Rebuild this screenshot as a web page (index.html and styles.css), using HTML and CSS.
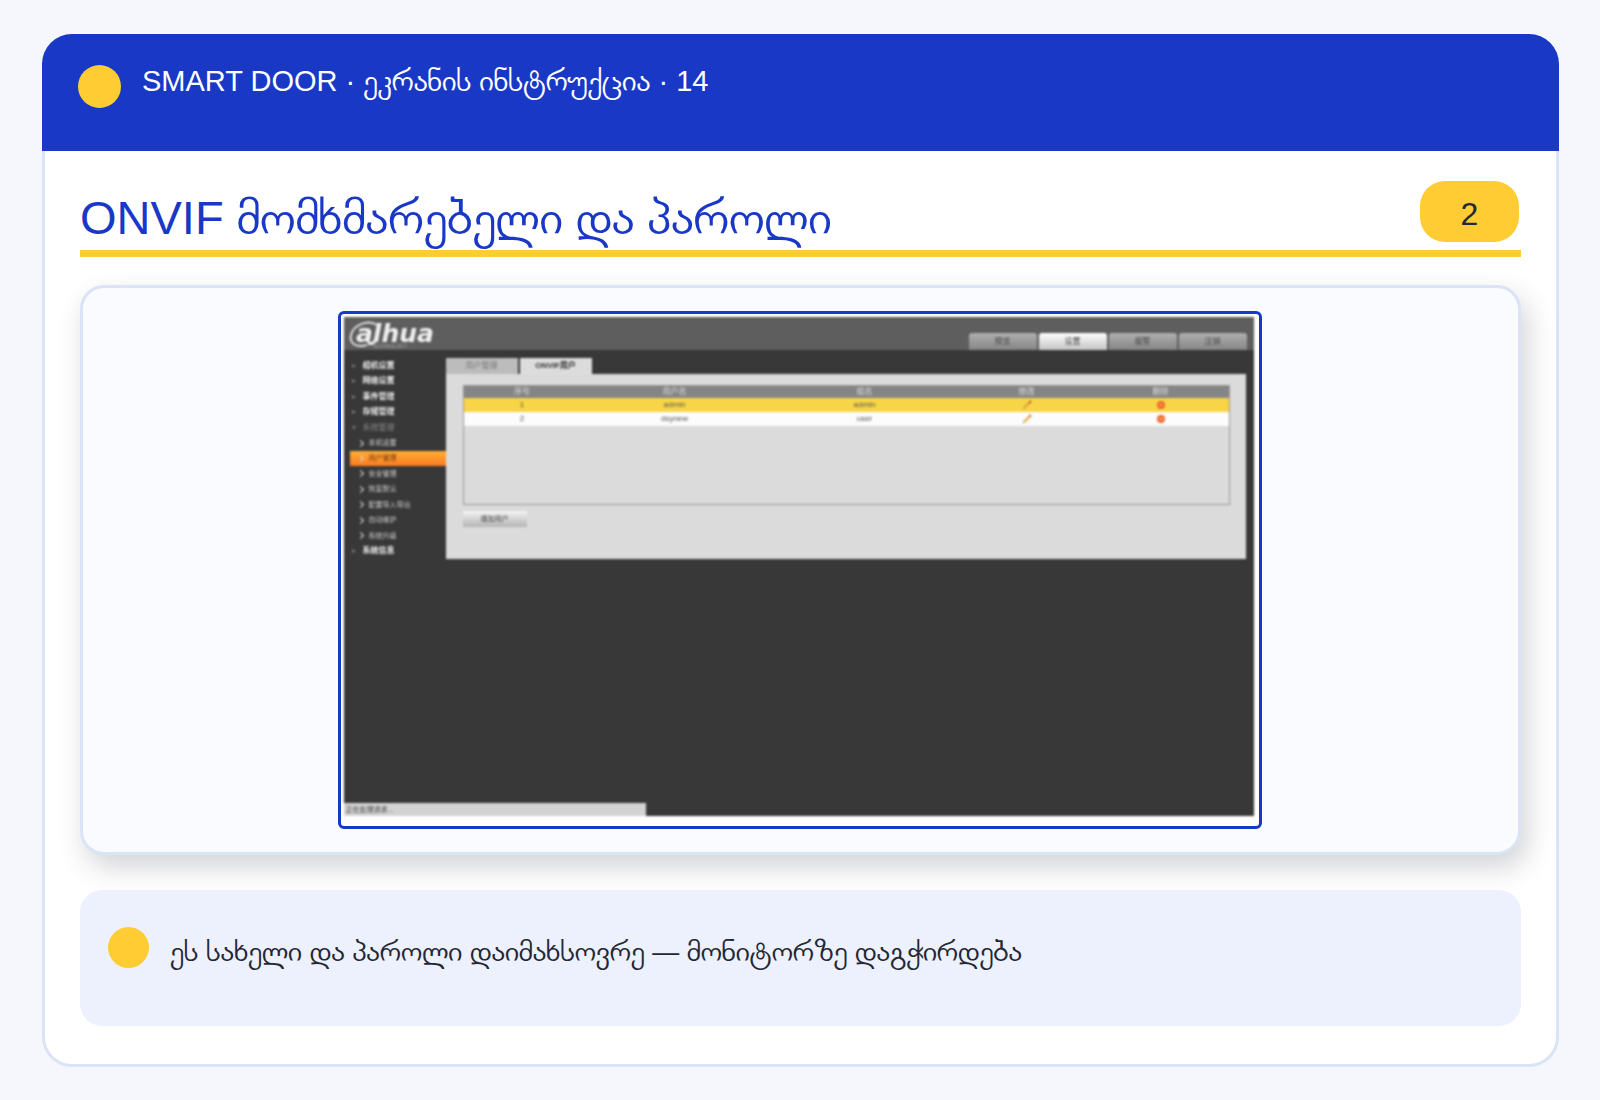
FILE: index.html
```html
<!DOCTYPE html>
<html lang="ka">
<head>
<meta charset="utf-8">
<meta name="viewport" content="width=device-width, initial-scale=1">
<title>SMART DOOR · ეკრანის ინსტრუქცია</title>
<link rel="stylesheet" href="styles.css">
</head>
<body>
<main class="card">
  <header class="card-header">
    <span class="dot"></span>
    <p class="series">SMART DOOR · <span class="ka">ეკრანის ინსტრუქცია</span> · 14</p>
  </header>
  <div class="card-body">
    <div class="title-row">
      <h1 class="title">ONVIF <span class="ka">მომხმარებელი და პაროლი</span></h1>
      <span class="step">2</span>
    </div>
    <section class="stage">
      <div class="frame">
        <div class="device" lang="zh">
          <div class="device-top">
            <svg class="logo" viewBox="0 0 88 30" role="img" aria-label="alhua technology">
              <path d="M28 5C21 0 5 3 2 15c-2 9 6 13 16 10" fill="none" stroke="#e0e0e0" stroke-width="2"/>
              <path d="M26 20c-1 4-4 4-7 3" fill="none" stroke="#f0f0f0" stroke-width="3"/>
              <text class="logo-name" x="7" y="22">alhua</text>
              <text class="logo-sub" x="23" y="28">TECHNOLOGY</text>
            </svg>
            <nav class="main-tabs">
              <button type="button">预览</button>
              <button type="button" class="on">设置</button>
              <button type="button">报警</button>
              <button type="button">注销</button>
            </nav>
          </div>
          <div class="device-main">
            <nav class="menu">
              <a href="#" class="group">相机设置</a>
              <a href="#" class="group">网络设置</a>
              <a href="#" class="group">事件管理</a>
              <a href="#" class="group">存储管理</a>
              <a href="#" class="group open">系统管理</a>
              <a href="#" class="item">本机设置</a>
              <a href="#" class="item current">用户管理</a>
              <a href="#" class="item">安全管理</a>
              <a href="#" class="item">恢复默认</a>
              <a href="#" class="item">配置导入导出</a>
              <a href="#" class="item">自动维护</a>
              <a href="#" class="item">系统升级</a>
              <a href="#" class="group">系统信息</a>
            </nav>
            <div class="content">
              <div class="sub-tabs">
                <button type="button">用户管理</button>
                <button type="button" class="on">ONVIF用户</button>
              </div>
              <div class="pane">
                <div class="table-box">
                  <table class="users">
                    <colgroup><col class="c-no"><col class="c-name"><col class="c-group"><col class="c-edit"><col class="c-del"></colgroup>
                    <thead><tr><th>序号</th><th>用户名</th><th>组名</th><th>修改</th><th>删除</th></tr></thead>
                    <tbody>
                      <tr class="selected"><td>1</td><td>admin</td><td>admin</td>
                        <td><svg class="ico" viewBox="0 0 10 10"><path d="M2 8l5-5" stroke="#d9a13c" stroke-width="2"/><path d="M7 3l2-2" stroke="#c8552f" stroke-width="2"/><path d="M1 9l1-1" stroke="#777"/></svg></td>
                        <td><svg class="ico" viewBox="0 0 10 10"><circle cx="5" cy="5" r="4" fill="#ee6524"/><path d="M3 5h4" stroke="#ffd9a8" stroke-width="1"/></svg></td></tr>
                      <tr><td>2</td><td>dsynew</td><td>user</td>
                        <td><svg class="ico" viewBox="0 0 10 10"><path d="M2 8l5-5" stroke="#e2a83c" stroke-width="2"/><path d="M7 3l2-2" stroke="#c8752f" stroke-width="2"/><path d="M1 9l1-1" stroke="#777"/></svg></td>
                        <td><svg class="ico" viewBox="0 0 10 10"><circle cx="5" cy="5" r="4" fill="#ee6524"/><path d="M3 5h4" stroke="#ffe9d8" stroke-width="1"/></svg></td></tr>
                    </tbody>
                  </table>
                </div>
                <button type="button" class="add">增加用户</button>
              </div>
            </div>
          </div>
          <div class="status">正在处理请求...</div>
        </div>
      </div>
    </section>
    <section class="note">
      <span class="dot"></span>
      <p><span class="ka">ეს სახელი და პაროლი დაიმახსოვრე</span> — <span class="ka">მონიტორზე დაგჭირდება</span></p>
    </section>
  </div>
</main>
</body>
</html>
```

FILE: styles.css
```css
* { box-sizing: border-box; }

body {
  margin: 0;
  padding: 34px 41px 33px 42px;
  min-height: 100vh;
  display: flex;
  background: #f5f7fd;
  color: #232834;
  font-family: "Liberation Sans", "DejaVu Sans", sans-serif;
}

p, h1 { margin: 0; font-weight: 400; }

/* Georgian letters are small on their body, so each line sets them larger */
.ka { font-family: FreeSans, "DejaVu Sans Condensed", "DejaVu Sans", sans-serif; }

.card {
  flex: 1;
  min-width: 0;
  display: flex;
  flex-direction: column;
}

.card-header {
  display: flex;
  align-items: flex-start;
  gap: 21px;
  height: 117px;
  padding: 31px 36px 0;
  background: #1938c6;
  color: #fff;
  border-radius: 30px 30px 0 0;
}

.dot {
  flex: none;
  width: 43px;
  height: 43px;
  border-radius: 50%;
  background: #ffcc33;
}

.series { font-size: 29px; line-height: 32px; }
.series .ka { font-size: 32px; }

.card-body {
  flex: 1;
  display: flex;
  flex-direction: column;
  padding: 30px 35px 38px;
  background: #fff;
  border: 3px solid #dbe3f6;
  border-top: 0;
  border-radius: 0 0 30px 30px;
}

.title-row {
  display: flex;
  justify-content: space-between;
  align-items: flex-start;
  height: 76px;
  padding-right: 2px;
  border-bottom: 7px solid #ffcc33;
}

.title {
  padding-top: 9px;
  color: #1938c6;
  font-size: 47px;
  line-height: 56px;
}
.title .ka { font-size: 52px; }

.step {
  width: 99px;
  height: 61px;
  padding-top: 3px;
  border-radius: 25px;
  background: #ffcc33;
  font-size: 32px;
  line-height: 60px;
  text-align: center;
}

.stage {
  flex: 1;
  margin-top: 28px;
  padding: 23px 24px 23px 22px;
  display: flex;
  justify-content: center;
  align-items: flex-start;
  background: #f9fbff;
  border: 3px solid #dbe3f6;
  border-radius: 24px;
  box-shadow: 6px 12px 28px rgba(30, 36, 50, 0.2);
}

.frame {
  width: 924px;
  padding: 3px 5px 10px 3px;
  background: #fff;
  border: 3px solid #1938c6;
  border-radius: 6px;
}

.device {
  display: flex;
  flex-direction: column;
  min-height: 499px;
  background: #383838;
  font: 8px/14px "Liberation Sans", "Noto Sans CJK SC", sans-serif;
  color: #444;
  filter: blur(0.8px);
}

.device button { border: 0; padding: 0; font: inherit; color: inherit; }

.device-top {
  display: flex;
  justify-content: space-between;
  align-items: flex-end;
  height: 33px;
  padding-right: 7px;
  background: #5e5e5e;
}

.logo { width: 88px; height: 30px; margin-left: 5px; }
.logo-name { font: italic 700 25px "DejaVu Sans", sans-serif; fill: #f0f0f0; }
.logo-sub { font: 5px "Liberation Sans", sans-serif; fill: #aaa; }

.main-tabs { display: flex; gap: 2px; }
.main-tabs button {
  width: 68px;
  height: 17px;
  border-radius: 3px 3px 0 0;
  background: linear-gradient(#b0b0b0, #858585);
}
.main-tabs .on { background: linear-gradient(#fff, #c4c4c4); }

.device-main { display: flex; padding: 8px 8px 0 6px; }

.menu {
  flex: none;
  width: 96px;
  height: 201px;
  display: grid;
  grid-template-rows: repeat(13, 1fr);
}
.menu a {
  display: flex;
  align-items: center;
  color: #ccc;
  text-decoration: none;
}
.menu a::before { content: ""; flex: none; }
.menu .group { gap: 7px; padding-left: 2px; color: #eee; font-weight: 700; }
.menu .group::before {
  border: 2px solid transparent;
  border-left: 4px solid #777;
  border-right: 0;
}
.menu .open { color: #888; font-weight: 400; }
.menu .open::before { border: 2px solid transparent; border-top: 4px solid #777; border-bottom: 0; }
.menu .item { gap: 6px; padding-left: 8px; font-size: 7px; }
.menu .item::before {
  width: 4px;
  height: 4px;
  border: solid #ddd;
  border-width: 1px 1px 0 0;
  transform: rotate(45deg);
}
.menu .current { background: linear-gradient(#ffae35, #f97a22); color: #6b3510; }

.content { flex: 1; min-width: 0; }
.sub-tabs { display: flex; gap: 2px; }
.sub-tabs button { width: 72px; height: 16px; background: #bcbcbc; color: #777; }
.sub-tabs .on { background: #dcdcdc; color: #333; font-weight: 700; }

.pane { height: 185px; padding: 11px 16px 0 17px; background: #dbdbdb; }
.table-box { height: 120px; border: 1px solid #999; }

.users { width: 100%; table-layout: fixed; border-collapse: collapse; text-align: center; }
.users th, .users td { padding: 0; height: 14px; line-height: 14px; }
.users th { height: 12px; line-height: 12px; background: #858585; color: #ddd; font-weight: 400; }
.users td { background: #fcfcfc; color: #555; }
.users .selected td { background: #f8d547; }
.c-no { width: 117px; }
.c-name { width: 188px; }
.c-group { width: 192px; }
.c-edit { width: 132px; }
.ico { display: block; width: 10px; height: 10px; margin: 0 auto; }

.device .add {
  display: block;
  width: 64px;
  height: 16px;
  margin-top: 6px;
  background: linear-gradient(#f4f4f4, #b4b4b4);
  font-size: 7px;
}

.status {
  width: 302px;
  height: 13px;
  margin-top: auto;
  padding-left: 2px;
  font-size: 7px;
  line-height: 13px;
  background: #d3d3d3;
}

.note {
  display: flex;
  align-items: flex-start;
  gap: 21px;
  min-height: 136px;
  margin-top: 35px;
  padding: 37px 28px;
  background: #edf1fe;
  border-radius: 22px;
}
.note .dot { width: 41px; height: 41px; }
.note p { padding-top: 8px; font-size: 27px; line-height: 34px; }
.note .ka { font-size: 31px; }
```
